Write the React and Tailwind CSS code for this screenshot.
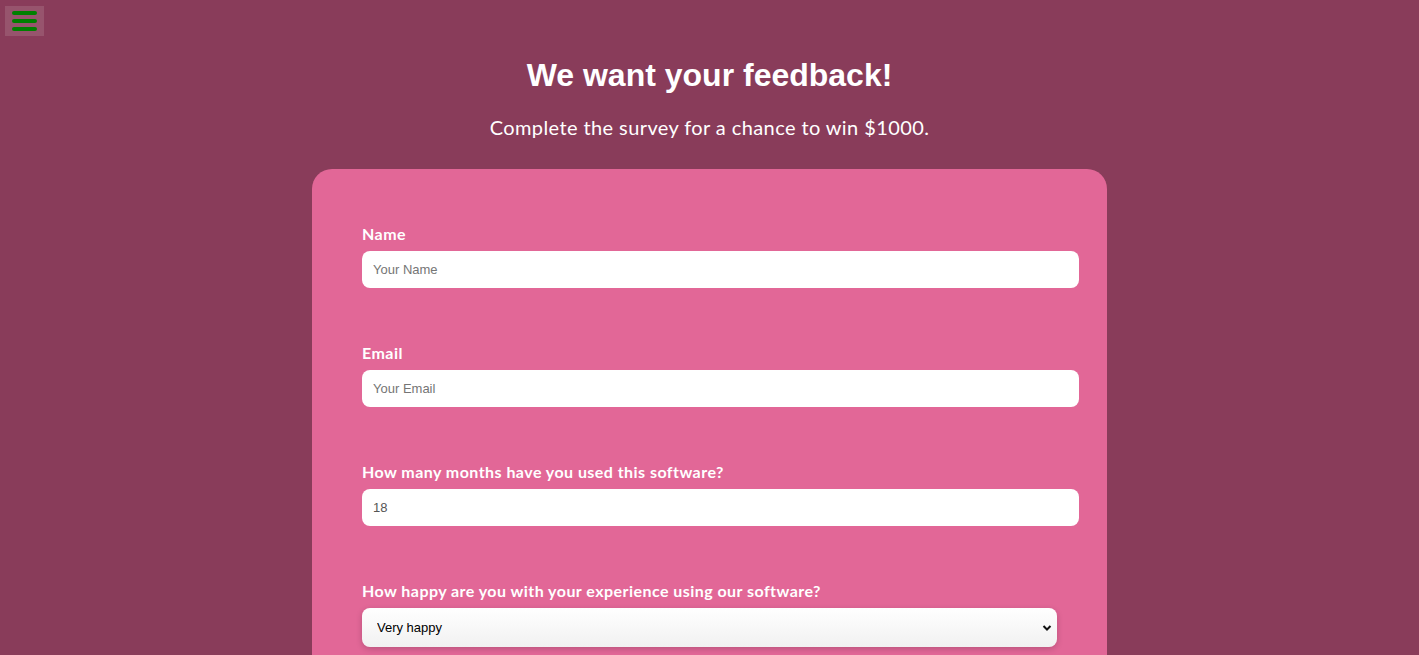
import React from "react";

const Field = ({ label, children }) => (
  <div className="mb-[55px] flex flex-col">
    <label className="mb-[7px] text-[16px] leading-[20px] font-bold tracking-[0.45px] text-white [font-family:Lato,'Open_Sans',sans-serif]">
      {label}
    </label>
    {children}
  </div>
);

const inputCls =
  "h-[37px] w-[717px] rounded-[8px] bg-white px-[11px] text-[13px] text-[#555] placeholder:text-[#757575] outline-none [font-family:'Liberation_Sans',Arial,sans-serif]";

export default function App() {
  return (
    <div className="min-h-[655px] w-full overflow-hidden bg-[#893c5a]">
      <button className="absolute left-[5px] top-[6px] flex h-[30px] w-[39px] flex-col items-center justify-center gap-[4px] bg-[#97546d]">
        <span className="block h-[4px] w-[25px] rounded-full bg-[#008000]" />
        <span className="block h-[4px] w-[25px] rounded-full bg-[#008000]" />
        <span className="block h-[4px] w-[25px] rounded-full bg-[#008000]" />
      </button>

      <div className="flex flex-col items-center pt-[55px]">
        <h1 className="text-[32px] leading-[40px] font-bold text-white [font-family:'Liberation_Sans',Arial,sans-serif]">
          We want your feedback!
        </h1>
        <p className="mt-[20px] text-[20px] leading-[24px] tracking-[0.4px] text-white [font-family:Lato,'Open_Sans',sans-serif]">
          Complete the survey for a chance to win $1000.
        </p>

        <form className="mt-[30px] w-[795px] rounded-[20px] bg-[#e26797] pl-[50px] pr-[28px] pt-[55px] pb-[40px]">
          <Field label="Name">
            <input type="text" placeholder="Your Name" className={inputCls} />
          </Field>
          <Field label="Email">
            <input type="email" placeholder="Your Email" className={inputCls} />
          </Field>
          <Field label="How many months have you used this software?">
            <input type="text" defaultValue="18" className={inputCls} />
          </Field>
          <Field label="How happy are you with your experience using our software?">
            <div className="relative w-[695px]">
              <select className="h-[39px] w-full appearance-none rounded-[8px] bg-gradient-to-b from-white to-[#f1f1f1] px-[15px] text-[13px] text-black shadow-[0_2px_6px_rgba(0,0,0,0.18)] outline-none [font-family:'Liberation_Sans',Arial,sans-serif]">
                <option>Very happy</option>
                <option>Happy</option>
                <option>Neutral</option>
                <option>Unhappy</option>
              </select>
              <svg
                className="pointer-events-none absolute right-[5px] top-[16px]"
                width="10"
                height="8"
                viewBox="0 0 10 8"
              >
                <path d="M1.5 2 L5 5.5 L8.5 2" fill="none" stroke="#111" strokeWidth="2" />
              </svg>
            </div>
          </Field>
        </form>
      </div>
    </div>
  );
}
